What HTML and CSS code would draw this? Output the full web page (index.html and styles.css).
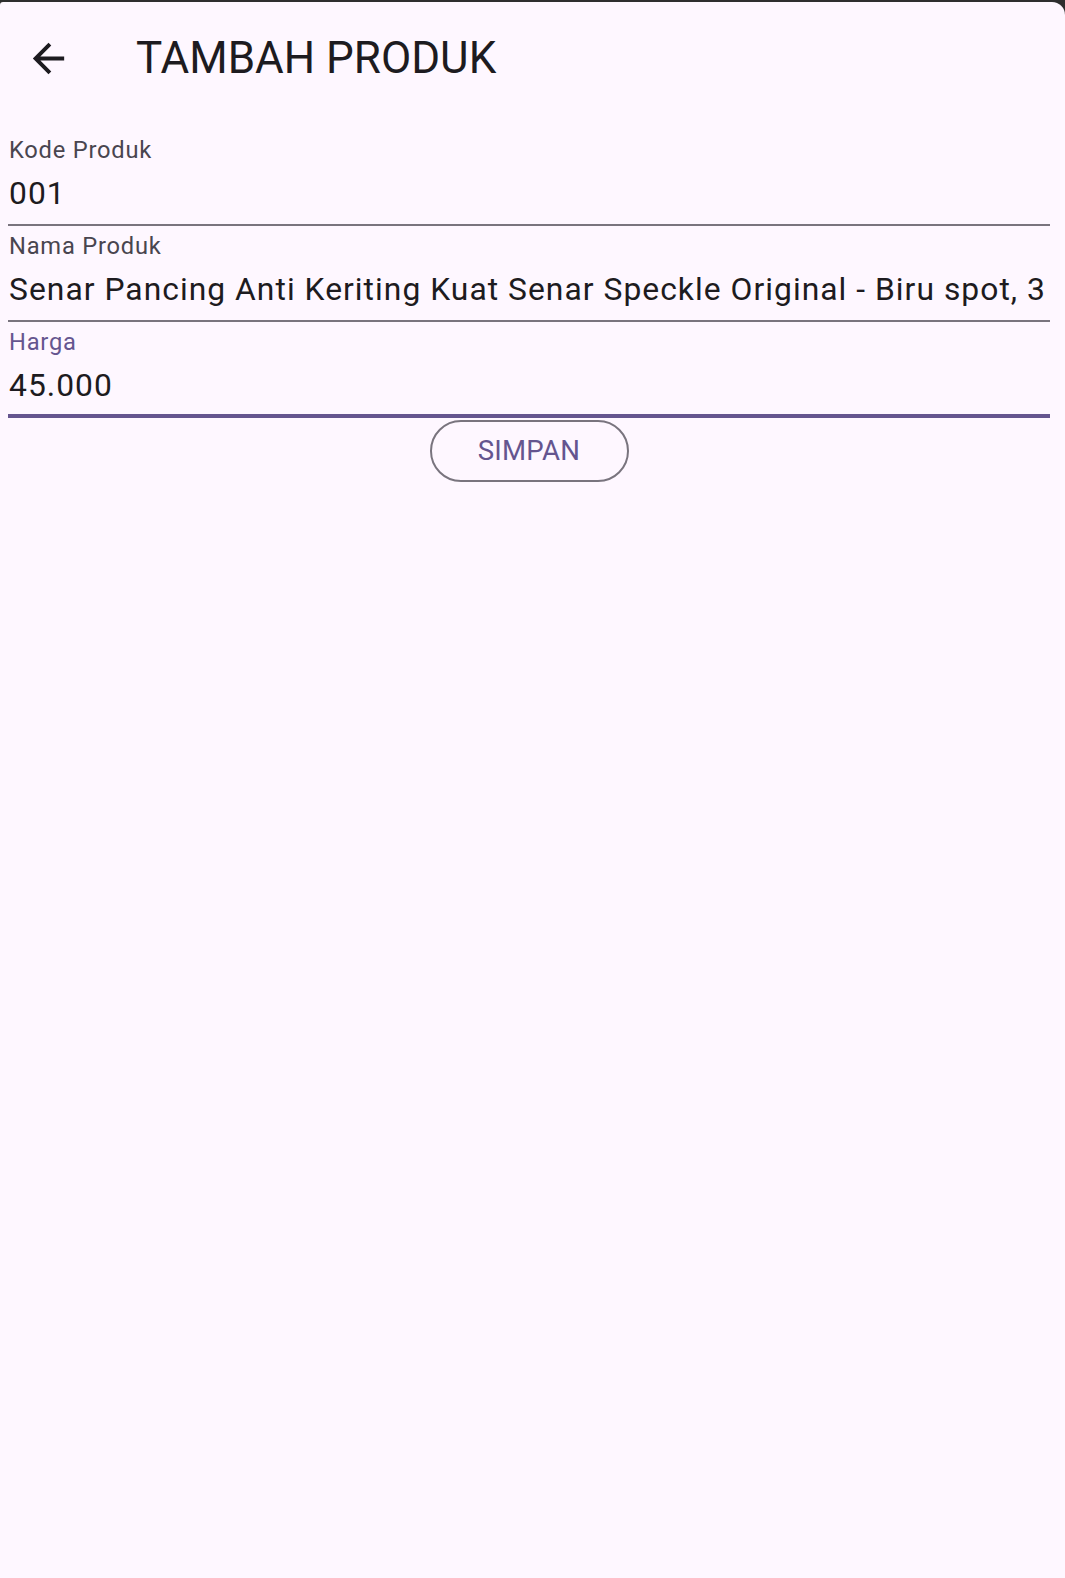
FILE: index.html
```html
<!DOCTYPE html>
<html lang="id">
<head>
<meta charset="utf-8">
<title>Tambah Produk</title>
<link rel="stylesheet" href="styles.css">
</head>
<body>
<div class="screen">
  <header class="appbar">
    <button class="back" aria-label="Kembali">
      <svg viewBox="0 0 24 24" width="47" height="47"><path d="M20 11H7.83l5.59-5.59L12 4l-8 8 8 8 1.41-1.41L7.83 13H20v-2z" fill="#1D1B20"/></svg>
    </button>
    <h1 class="title">TAMBAH PRODUK</h1>
  </header>
  <form class="form">
    <div class="field">
      <label class="label">Kode Produk</label>
      <div class="value">001</div>
    </div>
    <div class="field">
      <label class="label">Nama Produk</label>
      <div class="value">Senar Pancing Anti Keriting Kuat Senar Speckle Original - Biru spot, 3</div>
    </div>
    <div class="field focused">
      <label class="label">Harga</label>
      <div class="value">45.000</div>
    </div>
    <div class="actions">
      <button type="button" class="btn">SIMPAN</button>
    </div>
  </form>
</div>
</body>
</html>
```
FILE: styles.css
```css
html, body {
  margin: 0;
  padding: 0;
}
body {
  background: #2e2e2e;
  font-family: Roboto, "Noto Sans", sans-serif;
  padding-top: 2px;
}
.screen {
  background: #FEF7FF;
  height: 1576px;
  border-radius: 3px 13px 0 0;
  overflow: hidden;
}
.appbar {
  height: 112px;
  display: flex;
  align-items: center;
  padding-bottom: 2px;
}
.back {
  border: 0;
  background: transparent;
  padding: 0;
  margin-left: 25px;
  width: 47px;
  height: 47px;
  display: flex;
  margin-top: 1px;
}
.title {
  margin: 0 0 0 64px;
  font-size: 44px;
  font-weight: 400;
  color: #1D1B20;
  line-height: 52px;
  letter-spacing: 0;
}
.form {
  padding: 14px 15px 0 8px;
  display: flex;
  flex-direction: column;
}
.field {
  display: flex;
  flex-direction: column;
  gap: 10px;
  padding: 6px 1px 12px 1px;
  border-bottom: 2px solid #79747E;
}
.label {
  font-size: 23.7px;
  line-height: 28px;
  letter-spacing: 0.78px;
  color: #49454F;
}
.value {
  font-size: 31.8px;
  line-height: 38px;
  letter-spacing: 1.03px;
  color: #1D1B20;
  white-space: nowrap;
}
.field.focused {
  border-bottom: 4px solid #65558F;
  padding-bottom: 10px;
}
.field.focused .label {
  color: #65558F;
}
.actions {
  display: flex;
  justify-content: center;
  padding-top: 1.5px;
}
.btn {
  width: 199px;
  height: 62px;
  border: 2px solid #79747E;
  border-radius: 31px;
  background: transparent;
  color: #65558F;
  font-family: Roboto, sans-serif;
  font-size: 27.6px;
  letter-spacing: 0.2px;
  font-weight: 400;
  padding: 0;
}
```
